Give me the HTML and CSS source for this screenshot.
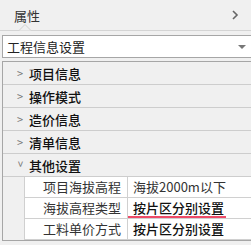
FILE: index.html
```html
<!DOCTYPE html>
<html lang="zh-CN">
<head>
    <meta charset="UTF-8">
    <title>属性</title>
    <link rel="stylesheet" href="styles.css">
</head>
<body>
    <!-- Header -->
    <div class="header">
        <span class="title">属性</span>
        <svg class="more" width="7" height="10" viewBox="0 0 7 10"><path d="M1 1 L5 5 L1 9" fill="none" stroke="#666" stroke-width="1.6"/></svg>
        <svg class="notch" width="12" height="7" viewBox="0 0 12 7"><path d="M0 6.5 L6 0.5 L12 6.5" fill="#f0f0f0" stroke="#d0d0d0" stroke-width="1"/></svg>
    </div>

    <!-- Combo box -->
    <div class="combo">
        <span>工程信息设置</span>
        <span class="caret"></span>
    </div>

    <!-- Property groups -->
    <div class="panel">
        <div class="group"><span class="arrow">&gt;</span>项目信息</div>
        <div class="group"><span class="arrow">&gt;</span>操作模式</div>
        <div class="group"><span class="arrow">&gt;</span>造价信息</div>
        <div class="group"><span class="arrow">&gt;</span>清单信息</div>
        <div class="group open"><span class="arrow">&gt;</span>其他设置</div>
        <div class="props">
            <div class="prop">
                <div class="name">项目海拔高程</div>
                <div class="value">海拔2000m以下</div>
            </div>
            <div class="prop">
                <div class="name">海拔高程类型</div>
                <div class="value strong marked">按片区分别设置</div>
            </div>
            <div class="prop">
                <div class="name">工料单价方式</div>
                <div class="value strong">按片区分别设置</div>
            </div>
        </div>
    </div>
</body>
</html>
```

FILE: styles.css
```css
body {
    margin: 0;
    width: 251px;
    height: 245px;
    overflow: hidden;
    background-color: #f0f0f0;
    font-family: "Noto Sans CJK SC", "Noto Sans", sans-serif;
    font-size: 13px;
    color: #222;
}

.header {
    position: relative;
    height: 30px;
    border-bottom: 1px solid #d4d4d4;
    display: flex;
    align-items: center;
    padding-left: 14px;
}

.title {
    font-size: 13px;
    color: #333;
}

.more {
    margin-left: auto;
    margin-right: 12px;
}

.notch {
    position: absolute;
    left: 19px;
    bottom: -1px;
}

.combo {
    margin: 4px -10px 0 2px;
    height: 21px;
    border: 1px solid #a6a6a6;
    background-color: #fff;
    display: flex;
    align-items: center;
    padding-left: 4px;
    padding-right: 14px;
}

.caret {
    margin-left: auto;
    width: 0;
    height: 0;
    border-left: 4px solid transparent;
    border-right: 4px solid transparent;
    border-top: 4px solid #777;
}

.panel {
    margin: 3px -10px 0 2px;
    border: 1px solid #a6a6a6;
    border-right: none;
}

.group {
    height: 22px;
    border-bottom: 1px solid #cdcdcd;
    display: flex;
    align-items: center;
    font-weight: 500;
    color: #111;
}

.arrow {
    width: 12px;
    margin-left: 14px;
    font-weight: normal;
    font-size: 11px;
    color: #777;
}

.group.open .arrow {
    display: inline-block;
    transform: rotate(90deg);
    width: 8px;
    margin-right: 4px;
}

.props {
    margin-left: 21px;
    background-color: #fff;
    border-left: 1px solid #d0d0d0;
}

.prop {
    display: flex;
    height: 20px;
    border-bottom: 1px solid #d0d0d0;
}

.name {
    width: 96px;
    padding-right: 6px;
    text-align: right;
    border-right: 1px solid #d0d0d0;
    line-height: 20px;
    color: #333;
}

.value {
    flex: 1;
    padding-left: 5px;
    line-height: 20px;
    color: #333;
}

.value.strong {
    font-weight: 500;
    color: #111;
}

.value.marked {
    position: relative;
}

.value.marked::after {
    content: "";
    position: absolute;
    left: 0;
    top: 18px;
    width: 98px;
    height: 2px;
    background-color: #ee4b68;
}
```
